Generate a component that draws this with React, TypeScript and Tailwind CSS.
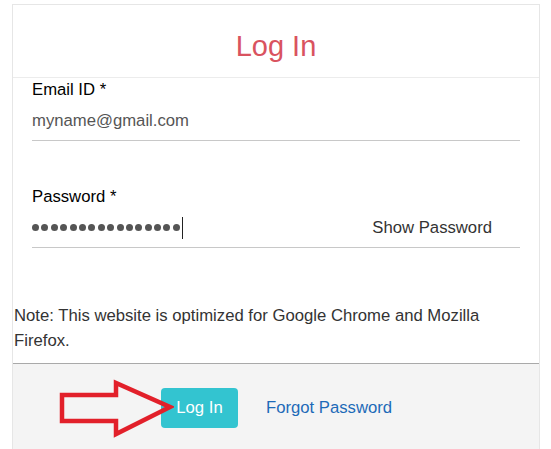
const font = { fontFamily: '"Liberation Sans", Arial, sans-serif' };

function Arrow() {
  return (
    <svg
      className="absolute left-[58px] top-[378px]"
      width="116"
      height="62"
      viewBox="0 0 116 62"
      fill="none"
    >
      <path
        d="M4 17 H58 V5 L112 29 L58 56 V43 H4 Z"
        stroke="#e2202a"
        strokeWidth="4.5"
        strokeLinejoin="miter"
      />
    </svg>
  );
}

export default function App() {
  const dots = Array.from({ length: 16 });

  return (
    <div
      className="relative w-[551px] h-[449px] bg-white overflow-hidden pt-[4px] pl-[12px]"
      style={font}
    >
      <div className="flex flex-col w-[528px] h-[445px] border-x border-t border-[#e6e6e6]">
        <div className="h-[73px] pt-[25px] border-b border-[#ececec] text-center">
          <h1 className="text-[29px] leading-[32px] text-[#d9535f]">Log In</h1>
        </div>

        <div className="px-[19px]">
          <label className="block mt-[3px] text-[16.7px] leading-[18px] text-black">
            Email ID *
          </label>
          <div className="h-[42px] pt-[2px] flex items-center border-b border-[#c8c8c8] text-[16.7px] leading-[18px] text-[#555]">
            myname@gmail.com
          </div>

          <label className="block mt-[47px] text-[16.7px] leading-[18px] text-black">
            Password *
          </label>
          <div className="h-[42px] pt-[2px] flex items-center border-b border-[#c8c8c8]">
            <div className="flex items-center gap-[2.4px]">
              {dots.map((_, i) => (
                <span key={i} className="w-[7px] h-[7px] rounded-full bg-[#555]" />
              ))}
            </div>
            <span className="ml-[2px] w-px h-[22px] bg-[#222]" />
            <span className="ml-auto mr-[28px] text-[16.7px] leading-[18px] text-[#333]">
              Show Password
            </span>
          </div>
        </div>

        <p className="mt-[55px] pl-px pr-[24px] text-[16.7px] leading-[25px] text-[#333]">
          Note: This website is optimized for Google Chrome and Mozilla Firefox.
        </p>

        <div className="mt-[10px] flex-1 border-t border-[#a9a9a9] bg-[#f4f4f4] pl-[148px] pt-[24px]">
          <div className="flex items-center">
            <button className="h-[40px] w-[77px] rounded-[4px] bg-[#33c4d0] text-[16.7px] text-white">
              Log In
            </button>
            <a className="ml-[28px] text-[16.7px] text-[#1d6ab8]" href="#">
              Forgot Password
            </a>
          </div>
        </div>
      </div>
      <Arrow />
    </div>
  );
}
